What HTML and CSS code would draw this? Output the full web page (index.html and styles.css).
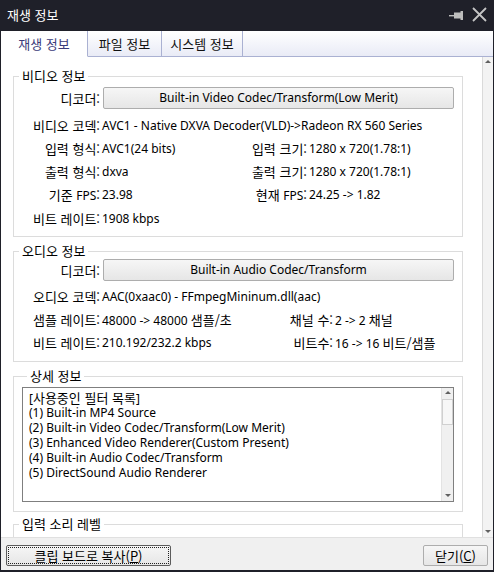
FILE: index.html
```html
<!DOCTYPE html>
<html lang="ko">
<head>
<meta charset="utf-8">
<title>재생 정보</title>
<link rel="stylesheet" href="styles.css">
</head>
<body>
<div class="window">
  <div class="titlebar">
    <span class="title">재생 정보</span>
    <div class="title-icons">
      <svg class="pin" width="15" height="9" viewBox="0 0 15 9">
        <rect x="0" y="4" width="6" height="1.4" fill="#bdbdbd"/>
        <rect x="5" y="1.5" width="7" height="6" fill="#bdbdbd"/>
        <rect x="11.5" y="0" width="2.5" height="9" fill="#bdbdbd"/>
      </svg>
      <svg class="close" width="15" height="15" viewBox="0 0 15 15">
        <path d="M1 1 L14 14 M14 1 L1 14" stroke="#c4c4c4" stroke-width="1.8" fill="none"/>
      </svg>
    </div>
  </div>
  <div class="tabs">
    <div class="tab active">재생 정보</div>
    <div class="tab">파일 정보</div>
    <div class="tab">시스템 정보</div>
    <div class="tab-fill"></div>
  </div>
  <div class="body">
    <div class="content">
      <fieldset class="group video">
        <legend>비디오 정보</legend>
        <div class="decoder-row">
          <span class="lbl">디코더:</span>
          <div class="btn wide">Built-in Video Codec/Transform(Low Merit)</div>
        </div>
        <div class="info-grid video-grid">
          <span class="lbl">비디오 코덱:</span><span class="val span3">AVC1 - Native DXVA Decoder(VLD)-&gt;Radeon RX 560 Series</span>
          <span class="lbl">입력 형식:</span><span class="val">AVC1(24 bits)</span><span class="lbl">입력 크기:</span><span class="val">1280 x 720(1.78:1)</span>
          <span class="lbl">출력 형식:</span><span class="val">dxva</span><span class="lbl">출력 크기:</span><span class="val">1280 x 720(1.78:1)</span>
          <span class="lbl">기준 <span class="lat">FPS</span>:</span><span class="val">23.98</span><span class="lbl">현재 <span class="lat">FPS</span>:</span><span class="val">24.25 -&gt; 1.82</span>
          <span class="lbl">비트 레이트:</span><span class="val">1908 kbps</span>
        </div>
      </fieldset>
      <fieldset class="group audio">
        <legend>오디오 정보</legend>
        <div class="decoder-row">
          <span class="lbl">디코더:</span>
          <div class="btn wide">Built-in Audio Codec/Transform</div>
        </div>
        <div class="info-grid audio-grid">
          <span class="lbl">오디오 코덱:</span><span class="val span3">AAC(0xaac0) - FFmpegMininum.dll(aac)</span>
          <span class="lbl">샘플 레이트:</span><span class="val">48000 -&gt; 48000 <span class="ko">샘플/초</span></span><span class="lbl">채널 수:</span><span class="val">2 -&gt; 2 <span class="ko">채널</span></span>
          <span class="lbl">비트 레이트:</span><span class="val">210.192/232.2 kbps</span><span class="lbl">비트수:</span><span class="val">16 -&gt; 16 <span class="ko">비트/샘플</span></span>
        </div>
      </fieldset>
      <fieldset class="group detail">
        <legend>상세 정보</legend>
        <div class="textbox">
          <div class="textbox-text">
            <div class="line">[<span class="ko">사용중인 필터 목록</span>]</div>
            <div class="line">(1) Built-in MP4 Source</div>
            <div class="line">(2) Built-in Video Codec/Transform(Low Merit)</div>
            <div class="line">(3) Enhanced Video Renderer(Custom Present)</div>
            <div class="line">(4) Built-in Audio Codec/Transform</div>
            <div class="line">(5) DirectSound Audio Renderer</div>
          </div>
          <div class="sbar small">
            <div class="arrow up"></div>
            <div class="thumb"></div>
            <div class="track"></div>
            <div class="arrow down"></div>
          </div>
        </div>
      </fieldset>
      <fieldset class="group level">
        <legend>입력 소리 레벨</legend>
        <div class="level-space"></div>
      </fieldset>
    </div>
    <div class="sbar main">
      <div class="arrow up"></div>
      <div class="track"></div>
      <div class="arrow down"></div>
    </div>
  </div>
  <div class="footer">
    <div class="btn default"><span class="focus">클립 보드로 복사(<u>P</u>)</span></div>
    <div class="btn close-btn">닫기(<u>C</u>)</div>
  </div>
</div>
</body>
</html>
```
FILE: styles.css
```css
html, body {
  margin: 0;
  padding: 0;
}
body {
  width: 494px;
  height: 572px;
  overflow: hidden;
  font-family: "Noto Sans", "Noto Sans CJK KR", sans-serif;
  font-size: 12px;
  color: #000;
}
.ko {
  font-family: "Noto Sans CJK KR", sans-serif;
  font-size: 13px;
}
.lat {
  font-family: "Noto Sans", sans-serif;
  font-size: 12px;
}
.window {
  box-sizing: border-box;
  width: 494px;
  height: 572px;
  background: #1f2029;
  padding: 0 1px 2px 1px;
  display: flex;
  flex-direction: column;
}
.titlebar {
  height: 31px;
  flex: none;
  display: flex;
  align-items: center;
  justify-content: space-between;
  padding: 0 6px 2px 6px;
  box-sizing: border-box;
}
.title {
  color: #fff;
  font-size: 13px;
  line-height: 16px;
  font-family: "Noto Sans CJK KR", sans-serif;
}
.title-icons {
  display: flex;
  align-items: center;
  gap: 8px;
}
.pin { display: block; margin-top: 1px; }
.close { display: block; }

.tabs {
  height: 26px;
  flex: none;
  display: flex;
  background: #fff;
}
.tab {
  box-sizing: border-box;
  height: 26px;
  line-height: 25px;
  text-align: center;
  background: linear-gradient(#ffffff, #e9ebf6);
  border-right: 1px solid #aab1d2;
  border-bottom: 1px solid #aab1d2;
  font-family: "Noto Sans CJK KR", sans-serif;
  font-size: 13px;
  color: #111;
}
.tab:nth-child(2) { width: 74px; }
.tab:nth-child(3) { width: 81px; }
.tab.active {
  width: 87px;
  background: #fff;
  border-bottom-color: #fff;
  color: #3b3b7a;
}
.tab-fill {
  flex: 1;
  box-sizing: border-box;
  background: linear-gradient(#ffffff, #e9ebf6);
  border-bottom: 1px solid #aab1d2;
}

.body {
  flex: 1;
  display: flex;
  background: #fff;
  overflow: hidden;
}
.content {
  flex: 1;
  padding: 11px 19px 0 12px;
  overflow: hidden;
}
.group {
  margin: 0 0 6px 0;
  border: 1px solid #dcdcdc;
  padding: 0 8px 5px 0;
  min-width: 0;
}
.group legend {
  padding: 0 3px;
  margin-left: 5px;
  height: 16px;
  line-height: 16px;
  font-family: "Noto Sans CJK KR", sans-serif;
  font-size: 13px;
}
.video { padding-top: 3px; padding-bottom: 6px; }
.audio { padding-top: 0; padding-bottom: 7px; }
.detail { padding: 3px 8px 9px 8px; margin-bottom: 4px; }
.level { padding-bottom: 0; }
.level-space { height: 30px; }

.decoder-row {
  display: flex;
  align-items: center;
  height: 22px;
}
.decoder-row .lbl {
  width: 86px;
  flex: none;
}
.lbl {
  text-align: right;
  white-space: nowrap;
  font-family: "Noto Sans CJK KR", sans-serif;
  font-size: 13px;
}
.btn {
  box-sizing: border-box;
  border: 1px solid #adadad;
  border-radius: 2px;
  background: linear-gradient(#f6f6f6, #e6e6e6);
  text-align: center;
  white-space: nowrap;
}
.btn.wide {
  flex: 1;
  margin-left: 3px;
  height: 22px;
  line-height: 20px;
}
.info-grid {
  display: grid;
  line-height: 23px;
  margin-top: 5px;
}
.video-grid {
  grid-template-columns: 86px 130px 77px 1fr;
  grid-template-rows: 23px 23px 23px 24px 23px;
}
.audio-grid {
  grid-template-columns: 86px 156px 77px 1fr;
  grid-template-rows: 23px 23px 23px;
  margin-top: 4px;
}
.val {
  padding-left: 2px;
  white-space: nowrap;
}
.span3 { grid-column: 2 / 5; }

.textbox {
  box-sizing: border-box;
  height: 115px;
  border: 1px solid #7f7f7f;
  display: flex;
  background: #fff;
  overflow: hidden;
}
.textbox-text {
  flex: 1;
  padding: 2px 0 0 6px;
  white-space: nowrap;
}
.line {
  height: 15px;
  line-height: 15px;
}
.sbar {
  display: flex;
  flex-direction: column;
  background: #f0f0f0;
  flex: none;
}
.sbar.small {
  width: 11px;
  border-left: 1px solid #e3e3e3;
}
.sbar.main {
  width: 10px;
  border-left: 1px solid #dadada;
  background: #f3f3f3;
}
.arrow {
  height: 10px;
  flex: none;
  position: relative;
}
.arrow::after {
  content: "";
  position: absolute;
  left: 50%;
  top: 50%;
  margin-left: -3px;
  margin-top: -2px;
  border-left: 3px solid transparent;
  border-right: 3px solid transparent;
}
.arrow.up::after { border-bottom: 3px solid #606060; }
.arrow.down::after { border-top: 3px solid #606060; }
.thumb {
  height: 26px;
  flex: none;
  margin: 1px 0 0 0;
  box-sizing: border-box;
  border: 1px solid #d0d0d0;
  background: #f7f7f7;
}
.track { flex: 1; }

.footer {
  height: 33px;
  flex: none;
  box-sizing: border-box;
  background: #f0f0f0;
  border-top: 1px solid #e0e0e0;
  display: flex;
  justify-content: space-between;
  padding: 7px 5px 0 5px;
  font-family: "Noto Sans CJK KR", sans-serif;
  font-size: 13px;
}
.footer .btn {
  height: 21px;
  line-height: 19px;
}
.btn.default {
  width: 165px;
  border-color: #5c5c5c;
  padding: 1px;
}
.focus {
  display: block;
  height: 17px;
  line-height: 16px;
  border: 1px dotted #222;
  box-sizing: border-box;
}
.btn.close-btn { width: 65px; }
u { text-underline-offset: 1px; }
```
